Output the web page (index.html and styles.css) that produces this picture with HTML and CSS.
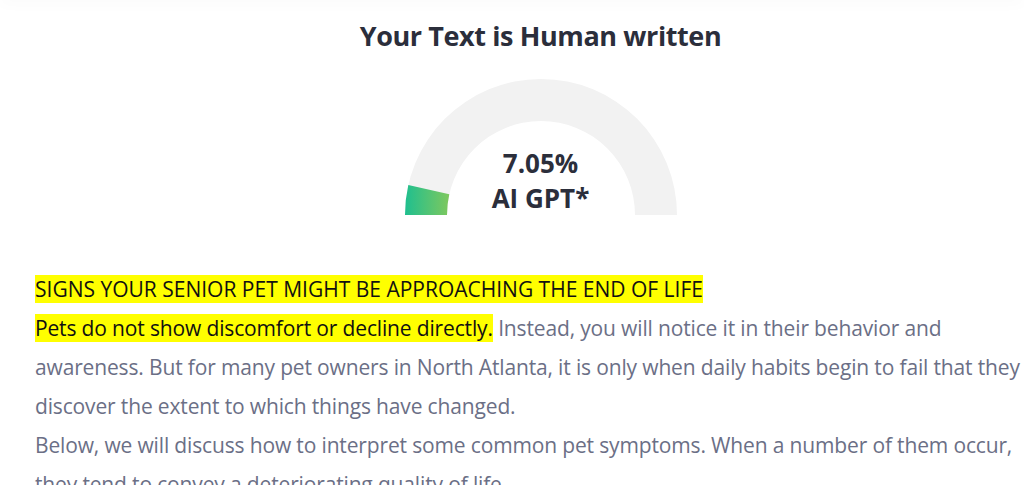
FILE: index.html
```html
<!DOCTYPE html>
<html lang="en">
<head>
<meta charset="utf-8">
<title>AI detection result</title>
<link rel="stylesheet" href="styles.css">
</head>
<body>
<div class="topbar"></div>
<main class="result">
  <h1 class="result-title">Your Text is Human written</h1>
  <div class="gauge">
    <svg class="gauge-svg" width="272" height="136" viewBox="0 0 272 136">
      <defs>
        <linearGradient id="g" x1="0" y1="0" x2="1" y2="0">
          <stop offset="0" stop-color="#1fbf8f"/>
          <stop offset="1" stop-color="#7ec85e"/>
        </linearGradient>
      </defs>
      <path d="M0,136 A136,136 0 0 1 272,136 L230,136 A94,94 0 0 0 42,136 Z" fill="#f2f2f2"/>
      <path d="M0,136 A136,136 0 0 1 3.32,106.12 L44.29,115.35 A94,94 0 0 0 42,136 Z" fill="url(#g)"/>
    </svg>
    <div class="gauge-label">
      <div>7.05%</div>
      <div>AI GPT*</div>
    </div>
  </div>
  <div class="text">
    <p class="line"><span class="hl hl-caps">SIGNS YOUR SENIOR PET MIGHT BE APPROACHING THE END OF LIFE</span></p>
    <p class="line"><span class="hl">Pets do not show discomfort or decline directly.</span> Instead, you will notice it in their behavior and awareness. But for many pet owners in North Atlanta, it is only when daily habits begin to fail that they discover the extent to which things have changed.</p>
    <p class="line">Below, we will discuss how to interpret some common pet symptoms. When a number of them occur, they tend to convey a deteriorating quality of life.</p>
  </div>
</main>
</body>
</html>
```

FILE: styles.css
```css
html, body {
  margin: 0;
  padding: 0;
  background: #ffffff;
  overflow: hidden;
}
body {
  font-family: "Open Sans", "Noto Sans", sans-serif;
  width: 1024px;
  height: 485px;
}
.topbar {
  height: 10px;
  margin-top: -10px;
  box-shadow: 0 4px 14px rgba(0, 0, 0, 0.025);
}
.result {
  margin-left: 35px;
  width: 1011px;
  display: flex;
  flex-direction: column;
  align-items: center;
}
.result-title {
  margin: 18px 0 0;
  font-size: 27px;
  line-height: 36px;
  font-weight: 700;
  color: #2b2e3b;
  letter-spacing: -0.4px;
}
.gauge {
  position: relative;
  width: 272px;
  height: 136px;
  margin-top: 25px;
}
.gauge-svg {
  display: block;
}
.gauge-label {
  position: absolute;
  left: 0;
  right: 0;
  top: 67px;
  text-align: center;
  font-size: 26px;
  line-height: 35px;
  font-weight: 700;
  color: #2b2e3b;
}
.text {
  align-self: flex-start;
  width: 1000px;
  margin-top: 55px;
  font-size: 21px;
  line-height: 39px;
  letter-spacing: -0.15px;
  color: #6b6f86;
}
.line {
  margin: 0;
}
.hl {
  background: #ffff00;
  color: #111111;
  letter-spacing: -0.15px;
}
.hl-caps {
  letter-spacing: 0;
}
```
